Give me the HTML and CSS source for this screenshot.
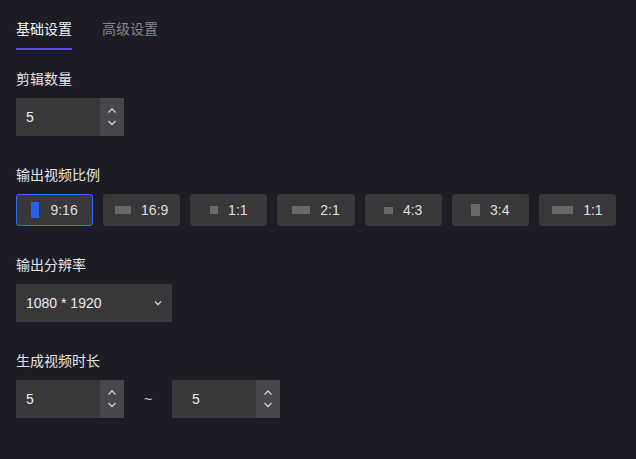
FILE: index.html
```html
<!DOCTYPE html>
<html lang="zh-CN">
<head>
<meta charset="utf-8">
<title>设置</title>
<link rel="stylesheet" href="styles.css">
</head>
<body>
<div class="panel">
  <nav class="tabs">
    <div class="tab tab-active">基础设置</div>
    <div class="tab">高级设置</div>
  </nav>

  <section class="field">
    <div class="label">剪辑数量</div>
    <div class="num">
      <div class="num-value">5</div>
      <div class="num-spin">
        <svg width="24" height="38" viewBox="0 0 24 38"><path d="M8.5 14.5 L12 11 L15.5 14.5 M8.5 23 L12 26.5 L15.5 23" fill="none" stroke="#d0d0d0" stroke-width="1.3"/></svg>
      </div>
    </div>
  </section>

  <section class="field">
    <div class="label">输出视频比例</div>
    <div class="ratios">
      <div class="ratio ratio-active"><span class="shape active-shape" style="width:8px;height:16px"></span><span>9:16</span></div>
      <div class="ratio"><span class="shape" style="width:16px;height:8px"></span><span>16:9</span></div>
      <div class="ratio"><span class="shape" style="width:8px;height:8px"></span><span>1:1</span></div>
      <div class="ratio"><span class="shape" style="width:18px;height:8px"></span><span>2:1</span></div>
      <div class="ratio"><span class="shape" style="width:9px;height:7px"></span><span>4:3</span></div>
      <div class="ratio"><span class="shape" style="width:9px;height:12px"></span><span>3:4</span></div>
      <div class="ratio"><span class="shape" style="width:21px;height:8px"></span><span>1:1</span></div>
    </div>
  </section>

  <section class="field">
    <div class="label">输出分辨率</div>
    <div class="select">
      <span>1080 * 1920</span>
      <svg width="12" height="12" viewBox="0 0 12 12"><path d="M3 4.5 L6 7.5 L9 4.5" fill="none" stroke="#d0d0d0" stroke-width="1.3"/></svg>
    </div>
  </section>

  <section class="field">
    <div class="label">生成视频时长</div>
    <div class="range">
      <div class="num">
        <div class="num-value">5</div>
        <div class="num-spin">
          <svg width="24" height="38" viewBox="0 0 24 38"><path d="M8.5 14.5 L12 11 L15.5 14.5 M8.5 23 L12 26.5 L15.5 23" fill="none" stroke="#d0d0d0" stroke-width="1.3"/></svg>
        </div>
      </div>
      <div class="tilde">~</div>
      <div class="num">
        <div class="num-value num-value-wide">5</div>
        <div class="num-spin">
          <svg width="24" height="38" viewBox="0 0 24 38"><path d="M8.5 14.5 L12 11 L15.5 14.5 M8.5 23 L12 26.5 L15.5 23" fill="none" stroke="#d0d0d0" stroke-width="1.3"/></svg>
        </div>
      </div>
    </div>
  </section>
</div>
</body>
</html>
```

FILE: styles.css
```css
html, body {
  margin: 0;
  padding: 0;
  background: #1d1c25;
}

body {
  font-family: "Liberation Sans", "Noto Sans CJK SC", sans-serif;
  font-size: 14px;
  color: #e2e2e2;
}

.panel {
  padding: 0 16px;
  display: flex;
  flex-direction: column;
}

.tabs {
  display: flex;
  gap: 30px;
  margin-bottom: 18px;
}

.tab {
  padding-top: 18px;
  padding-bottom: 8px;
  line-height: 22px;
  border-bottom: 2px solid transparent;
  color: #85848a;
}

.tab-active {
  color: #f2f2f2;
  border-bottom-color: #5a4fe0;
}

.field {
  display: flex;
  flex-direction: column;
  margin-bottom: 28px;
}

.label {
  line-height: 22px;
  margin-bottom: 8px;
  color: #e4e4e4;
}

.num {
  display: flex;
  width: 108px;
  height: 38px;
  background: #38383a;
}

.num-value {
  flex: 1;
  padding-left: 10px;
  line-height: 38px;
  color: #ececec;
}

.num-value-wide {
  padding-left: 20px;
}

.num-spin {
  width: 24px;
  height: 38px;
  background: #47474b;
}

.num-spin svg {
  display: block;
}

.ratios {
  display: grid;
  grid-template-columns: repeat(7, 1fr);
  gap: 10px;
  width: 600px;
}

.ratio {
  height: 32px;
  box-sizing: border-box;
  background: #38383a;
  border: 1px solid #38383a;
  border-radius: 3px;
  display: flex;
  align-items: center;
  justify-content: center;
  gap: 10px;
  color: #dedede;
}

.ratio-active {
  border-color: #2e6cf2;
  gap: 11px;
}

.shape {
  display: block;
  background: #69696b;
}

.active-shape {
  background: #2563eb;
}

.select {
  width: 156px;
  height: 38px;
  box-sizing: border-box;
  background: #38383a;
  display: flex;
  align-items: center;
  justify-content: space-between;
  padding: 0 8px 0 10px;
  color: #ececec;
}

.select svg {
  display: block;
}

.range {
  display: flex;
  align-items: center;
}

.tilde {
  width: 48px;
  text-align: center;
  color: #d8d8d8;
}
```
